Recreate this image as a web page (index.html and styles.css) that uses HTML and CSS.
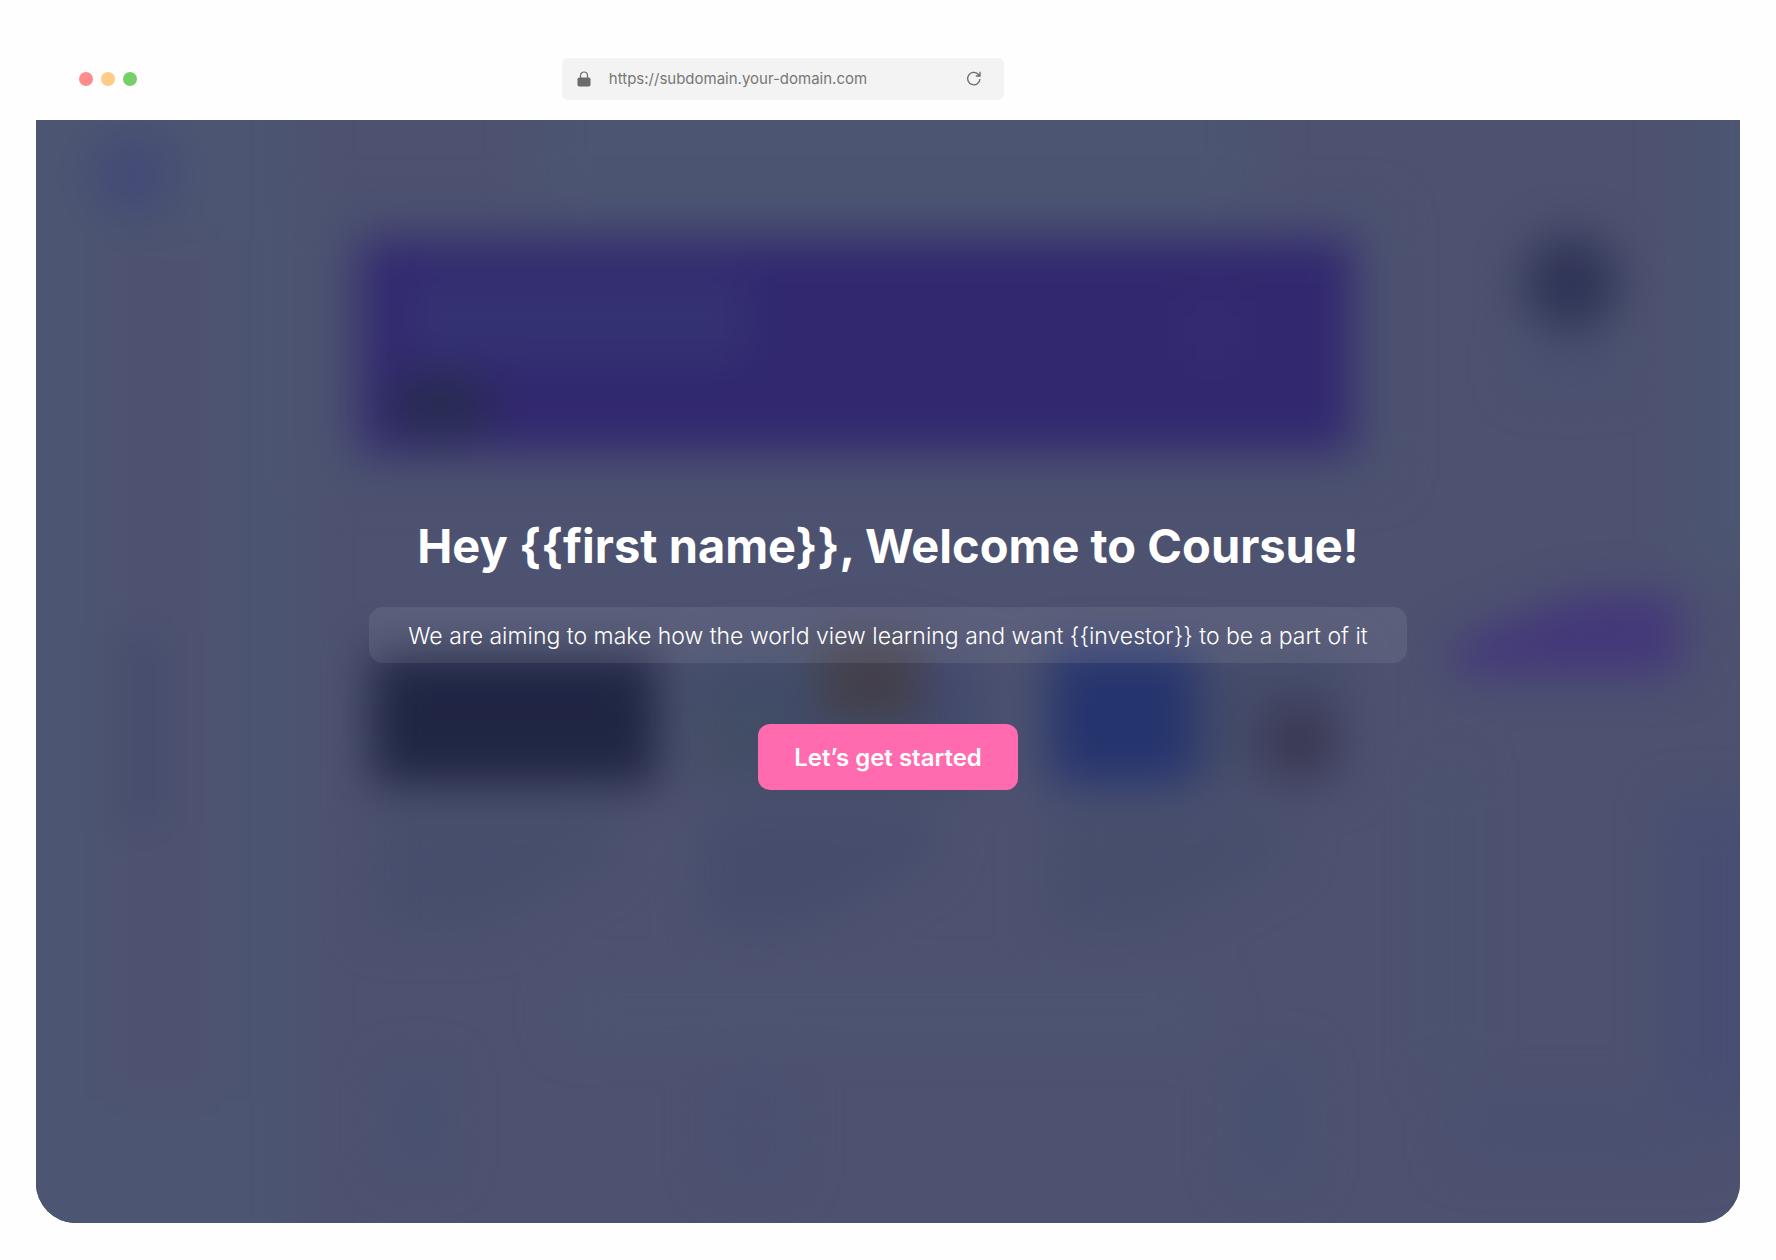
FILE: index.html
```html
<!DOCTYPE html>
<html lang="en">
<head>
    <meta charset="utf-8">
    <meta name="viewport" content="width=device-width, initial-scale=1">
    <title>Coursue</title>
    <link rel="stylesheet" href="styles.css">
</head>
<body>
    <header class="toolbar">
        <div class="dots">
            <span class="dot dot-red"></span>
            <span class="dot dot-yellow"></span>
            <span class="dot dot-green"></span>
        </div>
        <div class="address">
            <svg class="lock" viewBox="0 0 14 16" aria-hidden="true">
                <path d="M3.500 7V4.500a3.500 3.500 0 0 1 7 0V7" fill="none" stroke="#6b6b6b" stroke-width="1.200"/>
                <rect x="0.500" y="6.500" width="13" height="9" rx="1.800" fill="#6b6b6b"/>
            </svg>
            <input class="url" type="text" aria-label="Address" value="https://subdomain.your-domain.com">
            <button class="reload" type="button" aria-label="Reload">
                <svg viewBox="0 0 16 16" aria-hidden="true">
                    <path d="M14 8A6.200 6.200 0 1 1 12.200 3.200L13.800 4.800M14 0.800V5H9.800" fill="none" stroke="#6b6b6b" stroke-width="1.300"/>
                </svg>
            </button>
        </div>
    </header>

    <main class="screen">
        <!-- blurred dashboard behind the welcome message -->
        <svg class="backdrop" viewBox="0 0 1704 1103" preserveAspectRatio="none" aria-hidden="true">
            <defs>
                <filter id="blur" x="-50%" y="-50%" width="200%" height="200%" color-interpolation-filters="sRGB">
                    <feGaussianBlur stdDeviation="23"/>
                </filter>
            </defs>
            <rect width="1704" height="1103" fill="#4d5270"/>
            <g filter="url(#blur)">
                <rect x="-80" y="-80" width="345" height="1260" fill="#4c5571"/>
                <rect x="70" y="120" width="115" height="860" fill="#4d5270"/>
                <rect x="500" y="-80" width="720" height="165" fill="#4c5571"/>
                <rect x="1650" y="-80" width="130" height="540" fill="#4c5571"/>
                <rect x="290" y="90" width="1060" height="270" fill="#4b5270"/>
                <circle cx="98" cy="55" r="42" fill="#434a77"/>
                <rect x="80" y="510" width="50" height="200" fill="#464e6d"/>

                <rect x="324" y="119" width="994" height="214" fill="#31286f"/>
                <rect x="370" y="155" width="340" height="85" fill="#343272"/>
                <rect x="1160" y="180" width="30" height="60" fill="#372f73"/>
                <rect x="354" y="256" width="100" height="58" rx="26" fill="#272b4e"/>

                <rect x="336" y="534" width="286" height="130" fill="#1f2543"/>
                <rect x="658" y="534" width="290" height="130" fill="#414c68"/>
                <rect x="665" y="590" width="45" height="70" fill="#454e62"/>
                <rect x="785" y="520" width="100" height="80" fill="#433f49"/>
                <rect x="888" y="540" width="45" height="60" fill="#444871"/>
                <rect x="1004" y="534" width="306" height="130" fill="#444b69"/>
                <rect x="1015" y="530" width="145" height="134" fill="#25346e"/>
                <circle cx="1264" cy="622" r="38" fill="#3a3751"/>

                <path d="M336 690H580V740L450 810H336Z" fill="#474e6c"/>
                <path d="M665 690H900V740L770 810H665Z" fill="#464d6c"/>
                <path d="M1010 690H1250V740L1120 810H1010Z" fill="#474e6c"/>
                <rect x="355" y="950" width="55" height="100" fill="#495170"/>
                <rect x="680" y="950" width="75" height="110" fill="#4b5071"/>
                <rect x="1200" y="940" width="70" height="120" fill="#495170"/>
                <rect x="530" y="870" width="640" height="45" fill="#4c5571"/>

                <circle cx="1535" cy="163" r="48" fill="#2f3456"/>
                <rect x="1485" y="220" width="100" height="45" fill="#495170"/>
                <path d="M1415 525L1540 475H1645V555H1415Z" fill="#43377a"/>
                <rect x="1400" y="640" width="30" height="320" fill="#4a5270"/>
                <rect x="1630" y="680" width="90" height="320" fill="#484e73"/>
                <rect x="1420" y="980" width="260" height="60" fill="#4b5071"/>
            </g>
        </svg>
        <section class="welcome">
            <h1 class="heading">Hey {{first name}}, Welcome to Coursue!</h1>
            <p class="message">We are aiming to make how the world view learning and want {{investor}} to be a part of it</p>
            <button class="btn" type="button">Let’s get started</button>
        </section>
    </main>
</body>
</html>
```
FILE: styles.css
```css
* { box-sizing: border-box }
body {
    display: flex; flex-direction: column;
    min-height: 100vh; margin: 0; padding: 0 36px 37px;
    background-color: #fefefe;
    font-family: Inter, "Liberation Sans", sans-serif;
}
.toolbar {
    display: grid; align-items: center;
    grid-template-columns: 5fr minmax(0, 442px) 7fr;
    padding: 58px 0 20px;
}
.dots { display: flex; gap: 8px; padding-left: 43px }
.dot { width: 14px; height: 14px; border-radius: 50% }
.dot-red { background-color: #ff8c8c }
.dot-yellow { background-color: #ffcb86 }
.dot-green { background-color: #78ce68 }
.address {
    display: flex; align-items: center;
    height: 42px; padding: 0 22px 0 15px;
    background-color: #f3f3f3; border-radius: 6px;
}
.lock { width: 14px; height: 16px; flex: none }
.url {
    flex: 1; min-width: 0; margin: 0 16px; padding: 0 2px 2px;
    border: 0; background: none;
    color: #777777; font-family: inherit; font-size: 15px;
}
.reload {
    flex: none; width: 16px; height: 16px; padding: 0;
    border: 0; background: none; cursor: pointer;
}
.reload svg { display: block }
.screen {
    position: relative; flex: 1;
    display: flex; align-items: center; justify-content: center;
    padding: 24px 24px 60px; overflow: hidden;
    background-color: #4d5270; border-radius: 0 0 40px 40px;
}
.backdrop { position: absolute; inset: 0; width: 100%; height: 100% }
.welcome {
    position: relative; color: #ffffff;
    display: flex; flex-direction: column; align-items: center;
    text-align: center;
}
.heading {
    margin: 0 0 32px;
    font-size: 47px; font-weight: 700; line-height: 58px;
}
.message {
    margin: 0 0 61px; padding: 13px 39px 11px;
    background-color: rgba(255, 255, 255, 0.08); border-radius: 14px;
    font-size: 23px; font-weight: 300; line-height: 32px;
}
.btn {
    padding: 18px 36px 16px;
    border: 0; border-radius: 12px;
    background-color: #ff6bae; color: #ffffff;
    font-family: inherit; font-size: 24px; font-weight: 600; line-height: 32px;
    cursor: pointer;
}
.btn:hover { background-color: #ff559f }
```
